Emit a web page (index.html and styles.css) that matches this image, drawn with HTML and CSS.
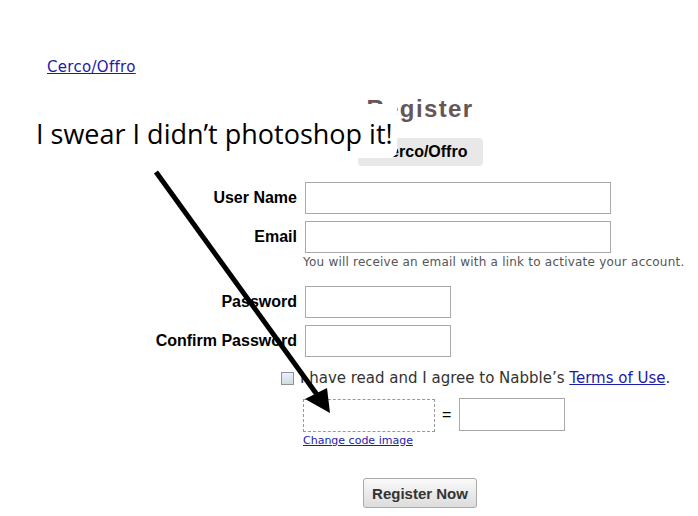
FILE: index.html
```html
<!DOCTYPE html>
<html lang="en">
<head>
  <meta charset="UTF-8" />
  <title>Register</title>
  <link rel="stylesheet" href="styles.css">
</head>
<body>

<div class="top">
  <a href="#" class="top-link">Cerco/Offro</a>
</div>

<div class="register">
  <h1>Register</h1>
  <div class="tab">Cerco/Offro</div>

  <form class="fields">
    <label>User Name</label>
    <input type="text" class="wide">

    <label>Email</label>
    <div class="cell">
      <input type="text" class="wide">
      <p class="hint">You will receive an email with a link to activate your account.</p>
    </div>

    <label>Password</label>
    <input type="password" class="short">

    <label>Confirm Password</label>
    <input type="password" class="short">
  </form>

  <div class="agree">
    <input type="checkbox" class="check">
    <span>I have read and I agree to Nabble’s <a href="#">Terms of Use</a>.</span>
  </div>

  <div class="captcha">
    <div class="code-row">
      <div class="code-img"></div>
      <span class="eq">=</span>
      <input type="text" class="code-input">
    </div>
    <a href="#" class="change">Change code image</a>
  </div>

  <div class="submit">
    <button type="button" class="btn">Register Now</button>
  </div>
</div>

<div class="note">I swear I didn’t photoshop it!</div>

<svg class="arrow" width="698" height="516" viewBox="0 0 698 516">
  <line x1="156" y1="172" x2="318" y2="396" stroke="#000" stroke-width="5" />
  <polygon points="330,413 305,399 327,388" fill="#000" />
</svg>

</body>
</html>
```

FILE: styles.css
```css
* {
  box-sizing: border-box;
}

html, body {
  margin: 0;
  padding: 0;
  background: #fff;
  width: 698px;
  height: 516px;
  overflow: hidden;
  font-family: 'Liberation Sans', Arial, sans-serif;
  color: #000;
}

a {
  color: #1c1ca8;
}

.top {
  padding: 58px 0 0 47px;
  height: 95px;
}

.top-link {
  font-family: 'DejaVu Sans', Verdana, sans-serif;
  font-size: 15px;
  line-height: 18px;
  letter-spacing: 0.3px;
}

.register {
  margin-left: 147px;
  width: 546px;
}

h1 {
  margin: 0;
  text-align: center;
  font-size: 24px;
  line-height: 28px;
  letter-spacing: 1.4px;
  color: #665656;
}

.tab {
  width: 125px;
  height: 28px;
  margin: 15px auto 0;
  padding-left: 6px;
  background: #e8e8e8;
  border-radius: 4px;
  text-align: center;
  font-weight: bold;
  font-size: 16px;
  line-height: 28px;
}

.fields {
  display: grid;
  grid-template-columns: 150px 1fr;
  column-gap: 8px;
  row-gap: 7px;
  align-items: start;
  margin-top: 16px;
}

.fields label {
  text-align: right;
  font-weight: bold;
  font-size: 16px;
  line-height: 32px;
}

.fields input {
  height: 32px;
  border: 1px solid #a9a9a9;
  margin: 0;
}

.wide {
  width: 306px;
}

.short {
  width: 146px;
}

.cell {
  display: flex;
  flex-direction: column;
}

.hint {
  margin: 1px 0 9px -2px;
  font-family: 'DejaVu Sans', Verdana, sans-serif;
  font-size: 12px;
  line-height: 16px;
  letter-spacing: 0.22px;
  color: #555;
  white-space: nowrap;
}

.agree {
  display: flex;
  align-items: center;
  gap: 6px;
  margin: 12px 0 0 134px;
  font-family: 'DejaVu Sans', Verdana, sans-serif;
  font-size: 15px;
  line-height: 18px;
  color: #333;
  white-space: nowrap;
}

.check {
  appearance: none;
  width: 13px;
  height: 13px;
  margin: 0;
  border: 1px solid #8f8f9d;
  background: linear-gradient(#eef, #cdd);
}

.captcha {
  margin: 10px 0 0 156px;
}

.code-row {
  display: flex;
  align-items: center;
  gap: 7px;
}

.code-img {
  width: 132px;
  height: 33px;
  border: 1px dashed #999;
  margin-top: 2px;
}

.eq {
  font-size: 16px;
  width: 10px;
}

.code-input {
  width: 106px;
  height: 33px;
  border: 1px solid #a9a9a9;
  margin: 0;
}

.change {
  display: block;
  margin-top: 2px;
  font-family: 'DejaVu Sans', Verdana, sans-serif;
  font-size: 11px;
  line-height: 14px;
}

.submit {
  text-align: center;
  margin-top: 30px;
}

.btn {
  height: 30px;
  padding: 0 8px;
  border: 1px solid #aaa;
  border-radius: 3px;
  background: linear-gradient(#fafafa, #dcdcdc);
  font-family: 'Liberation Sans', Arial, sans-serif;
  font-weight: bold;
  font-size: 15px;
  color: #333;
}

.note {
  position: absolute;
  left: 30px;
  top: 104px;
  width: 367px;
  height: 54px;
  padding: 10px 0 0 6px;
  background: #fff;
  border-radius: 0 0 8px 0;
  font-family: 'Open Sans', sans-serif;
  font-size: 27px;
  line-height: 40px;
  color: #000;
}

.arrow {
  position: absolute;
  left: 0;
  top: 0;
  pointer-events: none;
}
```
